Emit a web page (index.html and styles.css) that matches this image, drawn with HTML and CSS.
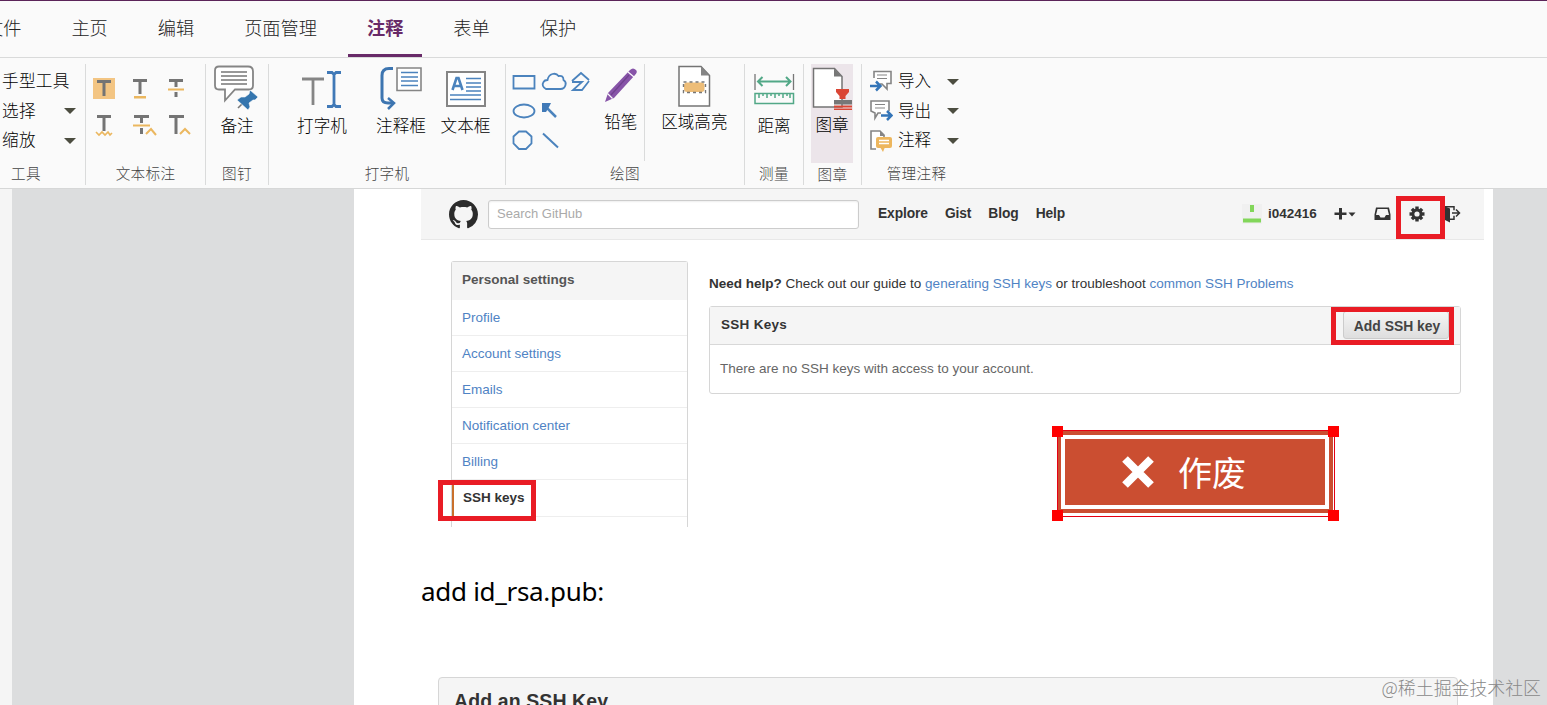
FILE: index.html
```html
<!DOCTYPE html>
<html lang="zh-CN">
<head>
<meta charset="utf-8">
<title>PDF</title>
<link rel="stylesheet" href="styles.css">
</head>
<body>
<div class="app">
<nav class="tabs">
  <span class="tab first">文件</span><span class="tab">主页</span><span class="tab">编辑</span><span class="tab">页面管理</span><span class="tab active">注释</span><span class="tab">表单</span><span class="tab">保护</span>
</nav>
<section class="ribbon">
  <div class="group g-tools">
    <div class="rows">
      <div class="row">手型工具</div>
      <div class="row">选择<i class="caret"></i></div>
      <div class="row">缩放<i class="caret"></i></div>
    </div>
    <div class="caption cap-tools">工具</div>
  </div>
  <div class="group g-text">
    <div class="marks">
      <svg viewBox="92 76 24 26"><path fill="#f3c583" d="M93 78h22v21H93z"/><path fill="none" stroke="#747474" stroke-width="3" d="M97 81.500h14M104 81v15"/></svg>
      <svg viewBox="128 76 24 26"><path fill="none" stroke="#747474" stroke-width="3" d="M133 80.500h14M140 80v14"/><path fill="#ebb75f" d="M134 96h12v2.500h-12z"/></svg>
      <svg viewBox="164 76 24 26"><path fill="none" stroke="#747474" stroke-width="3" d="M169 80.500h14M176 80v17"/><path stroke="#fafafa" stroke-width="5" d="M174 89.500h4"/><path stroke="#ebb75f" stroke-width="2" d="M168 89.500h16"/></svg>
      <svg viewBox="92 112 24 26"><path fill="none" stroke="#747474" stroke-width="3" d="M97 116.500h14M104 116v15"/><path fill="none" stroke="#ebb75f" stroke-width="1.600" d="m96 132 3 3 3-3 3 3 3-3 2 3 2-2"/></svg>
      <svg viewBox="128 112 30 26"><path fill="none" stroke="#747474" stroke-width="3" d="M134 116.500h15M141.500 116v18"/><path stroke="#fafafa" stroke-width="5" d="M139 125.500h5"/><path fill="none" stroke="#ebb75f" stroke-width="2" d="M133 125.500h17M146 134l5-5 5 6"/></svg>
      <svg viewBox="164 112 30 26"><path fill="none" stroke="#747474" stroke-width="3" d="M169 116.500h15M176 116v18"/><path fill="none" stroke="#ebb75f" stroke-width="2" d="m180 134 5-5 5 5"/></svg>
    </div>
    <div class="caption">文本标注</div>
  </div>
  <div class="group g-note">
    <div class="tool"><svg width="46" height="48" viewBox="214 64 46 48"><path fill="#fff" stroke="#858585" stroke-width="1.800" d="M219 66.500h29q5 0 5 5v14q0 4-4 4h-14l-10 11v-11h-6q-4 0-4-4v-15q0-4 4-4z"/><path stroke="#777" stroke-width="1.600" d="M221 72h26M221 76h26M221 80h26M221 84h26"/><path stroke="#777" stroke-width="1.600" d="m238 108 8-8"/><path fill="#3475ae" stroke="#fafafa" stroke-width=".6" d="m250 90 8 7-3 3-2 0-4 3 1 4-2 3-11-10 4-3h4l4-3z"/></svg><span>备注</span></div>
    <div class="caption">图钉</div>
  </div>
  <div class="group g-type">
    <div class="tools">
      <div class="tool w-a"><svg width="44" height="48" viewBox="301 64 44 48"><path fill="none" stroke="#858585" stroke-width="2.800" d="M303 79h22M314 79v26"/><path fill="none" stroke="#4079b7" stroke-width="2.800" d="M328 72.500h5l2 2 2-2h5M335 74v31M328 106.500h5l2-2 2 2h5"/></svg><span>打字机</span></div>
      <div class="tool w-b"><svg width="46" height="48" viewBox="379 64 46 48"><path fill="none" stroke="#3d75b0" stroke-width="3" d="M394 68.500h-4q-7 0-7 7V98q0 5 6 5h5"/><path fill="none" stroke="#3d75b0" stroke-width="2.500" d="m389 98 6 5-6 6"/><path fill="#fff" stroke="#858585" stroke-width="1.600" d="M398 68h24v22.500h-24z"/><path stroke="#4b83bd" stroke-width="1.700" d="M402 72.500h17M402 77h17M402 81h17M402 85.500h17"/></svg><span>注释框</span></div>
      <div class="tool w-c"><svg width="44" height="48" viewBox="444 64 44 48"><path fill="#fff" stroke="#858585" stroke-width="2" d="M447 72h38v34h-38z"/><path fill="none" stroke="#4b83bd" stroke-width="2.600" d="m452.500 90 4-12h2l4 12M454 86h7"/><path stroke="#4b83bd" stroke-width="1.600" d="M466 78.500h15M466 83h15M466 87h15M466 91h15M450 95h31M450 99.500h31"/></svg><span>文本框</span></div>
    </div>
    <div class="caption">打字机</div>
  </div>
  <div class="group g-draw">
    <div class="tools">
      <svg class="shapes" width="84" height="90" viewBox="510 68 84 90" fill="none" stroke="#4b83bd" stroke-width="1.800"><path d="M513.500 76h21v12.500h-21z"/><path d="M546 89q-5-3-2.500-7 1-2 4-2 1-5 5-6 4-1 6 2 5-1 5 4 3 2 2 5-1 4-5 4z"/><path d="m572 81 9-8 8 7M572 82h10l-9 8h9l7-9"/><ellipse cx="524" cy="111" rx="10.500" ry="6.500"/><path d="m545 106 11 11" stroke-width="2.500"/><path fill="#4079b7" stroke="none" d="M542 103h9l-2 4-3 5h-4z"/><path d="M519 131.500h7l5.500 5v7l-5.500 5.500h-7l-5.500-5.500v-7z"/><path d="m543 133.500 15 14" stroke-width="2"/></svg>
      <div class="tool w-d high"><svg width="38" height="48" viewBox="602 64 38 48"><path fill="#8754a8" d="m605 102 3-9 22-23q3-3 6 0 2 2-1 5l-21 23z"/><path stroke="#fafafa" stroke-width="1.200" d="m607.500 93.500 5 5M628 72l6 5"/><path stroke="#70418f" stroke-width="1.200" d="m611 95 18-20"/></svg><span>铅笔</span></div>
      <i class="divider"></i>
      <div class="tool w-e high"><svg width="36" height="48" viewBox="677 64 36 48"><path fill="#fff" stroke="#747474" stroke-width="1.500" d="M680 66.500h22l8.500 9V106H680z"/><path fill="#858585" d="M702 66.500v9h8.500z"/><rect x="685" y="82.500" width="20.500" height="9.500" rx="3" fill="#edbd78"/><rect x="684.500" y="82" width="22" height="10.500" fill="none" stroke="#777" stroke-width="1.400" stroke-dasharray="3 3"/></svg><span>区域高亮</span></div>
    </div>
    <div class="caption">绘图</div>
  </div>
  <div class="group g-dist">
    <div class="tool"><svg width="42" height="48" viewBox="754 64 42 48" fill="none"><path stroke="#777" stroke-width="1.300" d="M756 74v16M794.500 74v16"/><path stroke="#52a887" stroke-width="2" d="M759 81.500h32M763.500 77l-4.500 4.500 4.500 4.500M787 77l4.500 4.500-4.500 4.500"/><path stroke="#52a887" stroke-width="1.500" d="M756 93.500h38.500v10H756zM760 93v5M764 93v3M768 93v5M772 93v3M776 93v5M780 93v3M784 93v5M788 93v3M791 93v5"/></svg><span>距离</span></div>
    <div class="caption">测量</div>
  </div>
  <div class="group g-stamp">
    <div class="tool selected"><svg width="42" height="48" viewBox="811 64 42 48"><path fill="#fff" stroke="#747474" stroke-width="1.500" d="M813.500 68.500h21l7.500 8V107h-28.500z"/><path fill="#777" d="M834 68.500v8h8z"/><path fill="#da4635" d="M836 89h13v3l-3.500 4v3h-6v-3l-3.500-4zM834 105.500h18v2h-18zM834 108.500h18v1.500h-18z"/><path fill="#777" d="M834 100h18v4.500h-18z"/></svg><span>图章</span></div>
    <div class="caption">图章</div>
  </div>
  <div class="group g-manage">
    <div class="rows">
      <div class="row"><svg width="24" height="24" viewBox="869 70 24 24"><path fill="#fff" stroke="#858585" stroke-width="1.600" d="M874 79v-6.500h17v12h-4v5.500l-5-5h-2"/><path stroke="#858585" d="M877 76h10M877 79.500h10"/><path fill="none" stroke="#3475b8" stroke-width="2.500" d="M870 87h9M876 82.500l4.500 4.500-4.500 4.500"/></svg>导入<i class="caret"></i></div>
      <div class="row"><svg width="24" height="24" viewBox="869 99 24 24"><path fill="#fff" stroke="#858585" stroke-width="1.600" d="M881 114h-3l-3 5v-5l-4-2v-10h18v10"/><path stroke="#858585" d="M875 105.500h10M875 109h10"/><path fill="none" stroke="#3475b8" stroke-width="2.500" d="M881 116.500h9M887 112l4.500 4.500-4.500 4.500"/></svg>导出<i class="caret"></i></div>
      <div class="row"><svg width="24" height="24" viewBox="869 128 24 24"><path fill="#fff" stroke="#858585" stroke-width="1.600" d="M876 149h-5v-18h9l4 4v2"/><path fill="#858585" d="M880 131v5h5z"/><rect x="876" y="137" width="16" height="11" rx="2" fill="#edb65d"/><path fill="#edb65d" d="m880 147 3 5 2-5z"/><path stroke="#fff" stroke-width="1.300" d="M879 140.500h10M879 143.500h10"/></svg>注释<i class="caret"></i></div>
    </div>
    <div class="caption">管理注释</div>
  </div>
</section>
<main class="workspace">
<article class="page">
  <div class="shot">
    <header class="gh-header">
      <svg class="logo" viewBox="0 0 16 16"><path fill="#2b2b2b" d="M8 0C3.580 0 0 3.580 0 8c0 3.540 2.290 6.530 5.470 7.590.4.070.55-.17.55-.38 0-.19-.01-.82-.01-1.490-2.010.37-2.530-.49-2.690-.94-.09-.23-.48-.94-.82-1.130-.28-.15-.68-.52-.01-.53.63-.01 1.080.58 1.230.82.72 1.210 1.870.87 2.330.66.07-.52.28-.87.51-1.070-1.780-.2-3.640-.89-3.640-3.950 0-.87.31-1.590.82-2.150-.08-.2-.36-1.020.08-2.120 0 0 .67-.21 2.200.82.64-.18 1.320-.27 2-.27s1.360.09 2 .27c1.530-1.040 2.200-.82 2.200-.82.44 1.100.16 1.920.08 2.120.51.56.82 1.270.82 2.150 0 3.070-1.870 3.750-3.650 3.950.29.25.54.73.54 1.480 0 1.070-.01 1.930-.01 2.200 0 .21.15.46.55.38A8.010 8.010 0 0 0 16 8c0-4.420-3.580-8-8-8z"/></svg>
      <div class="search">Search GitHub</div>
      <nav class="links"><b>Explore</b><b>Gist</b><b>Blog</b><b>Help</b></nav>
      <div class="user">
        <svg width="20" height="20" viewBox="1242 204 20 20"><path fill="#f0f0f0" d="M1242 204h20v20h-20z"/><path fill="#82d65a" d="M1250 205h4v7h-4zM1243 218.500h18v4h-18z"/></svg>
        <b>i042416</b>
        <svg class="ic-plus" width="24" height="16" viewBox="1333 206 24 16"><path fill="#333" d="M1339 208h3v4.500h4.500v2.500H1342v4.500h-3V215h-4.500v-2.500h4.500zM1348.500 212.500h7l-3.500 4z"/></svg>
        <svg class="ic-inbox" width="18" height="16" viewBox="1373 206 18 16"><path fill="#333" fill-rule="evenodd" d="M1376 207.500h13l1.500 7v5.500H1374.500v-5.500zM1377.500 209l-1.500 6h3l1.500 2.500h4l1.500-2.500h3l-1.500-6z"/></svg>
        <svg class="ic-gear" width="16" height="16" viewBox="-8 -8 16 16"><g fill="#333"><path d="M-1.700-7.500h3.400v15h-3.400z"/><path transform="rotate(45)" d="M-1.700-7.200h3.400v14.400h-3.400z"/><path transform="rotate(90)" d="M-1.700-7.500h3.400v15h-3.400z"/><path transform="rotate(135)" d="M-1.700-7.200h3.400v14.400h-3.400z"/></g><circle r="4" fill="none" stroke="#333" stroke-width="3"/><circle r="2.600" fill="#f5f5f5"/></svg>
        <svg class="ic-out" width="18" height="18" viewBox="1443 204 18 18"><path fill="#333" d="m1444 205 6 2.500v14l-6-3z"/><path fill="none" stroke="#333" stroke-width="1.500" d="M1445 205.700h9v3.500M1450 218.200h4v-3.500M1452 212h7M1456 208.500l3.500 3.500-3.500 3.500"/></svg>
      </div>
      <i class="mark mark-gear"></i>
    </header>
    <div class="gh-body">
      <aside class="side">
        <div class="side-head">Personal settings</div>
        <a>Profile</a><a>Account settings</a><a>Emails</a><a>Notification center</a><a>Billing</a>
        <a class="current">SSH keys</a>
        <i class="mark mark-ssh"></i>
      </aside>
      <div class="content">
        <p class="help"><b>Need help?</b> Check out our guide to <a>generating SSH keys</a> or troubleshoot <a>common SSH Problems</a></p>
        <div class="box">
          <div class="box-head"><b>SSH Keys</b><button>Add SSH key</button><i class="mark mark-add"></i></div>
          <div class="box-body">There are no SSH keys with access to your account.</div>
        </div>
      </div>
    </div>
  </div>
  <p class="para"><span>add id_rsa.pub:</span></p>
  <div class="panel"><h2>Add an SSH Key</h2></div>
</article>
<div class="stamp">
  <div class="stamp-fill"><div class="stamp-frame"><svg width="34" height="34" viewBox="0 0 34 34"><path stroke="#fff" stroke-width="8" d="m4 4 26 26M30 4 4 30"/></svg><span>作废</span></div></div>
  <i class="h tl"></i><i class="h tr"></i><i class="h bl"></i><i class="h br"></i>
</div>
<div class="watermark">@稀土掘金技术社区</div>
</main>
</div>
</body>
</html>
```
FILE: styles.css
```css
* { box-sizing: border-box; }
body { margin: 0; font-family: "Noto Sans CJK SC", sans-serif; background: #fafafa; }
svg { display: block; flex: none; }
.app { width: 1547px; height: 705px; overflow: hidden; display: flex; flex-direction: column; }

.tabs { height: 58px; flex: none; display: flex; border-top: 1px solid #5b2459; border-bottom: 1px solid #d9dada; background: #fafafa; }
.tab { font-size: 18.200px; line-height: 26px; color: #222; padding: 13px 19px 0; margin-right: 12px; height: 56px; font-weight: 300; white-space: nowrap; }
.tab.first { margin-left: -34px; }
.tab.active { color: #682a68; font-weight: 700; border-bottom: 3px solid #682a68; }

.ribbon { height: 131px; flex: none; display: flex; background: #fafafa; border-bottom: 1px solid #d6d7d7; padding: 6px 0 3px; font-size: 16.6px; color: #000; font-weight: 300; }
.group { display: flex; flex-direction: column; justify-content: space-between; border-right: 1px solid #dadbdb; flex: none; }
.g-tools { width: 86px; }
.g-text { width: 120px; }
.g-note { width: 63px; }
.g-type { width: 237px; }
.g-draw { width: 239px; }
.g-dist { width: 59px; }
.g-stamp { width: 58px; }
.g-manage { width: 98px; border-right: 0; }
.caption { height: 22px; margin-bottom: 1px; font-size: 14.6px; line-height: 22px; color: #444; text-align: center; letter-spacing: .3px; white-space: nowrap; }
.cap-tools { text-align: left; padding-left: 11px; }
.g-manage .caption { padding-left: 11px; }
.rows { padding: 2px 0 0 2px; }
.g-tools .rows { letter-spacing: .3px; }
.row { display: flex; align-items: center; height: 29.500px; line-height: 29px; white-space: nowrap; }
.caret { width: 0; height: 0; margin: 2px 9px 0 auto; border: 6px solid transparent; border-bottom: 0; border-top: 6px solid #4c4d40; }
.g-manage .rows { padding-left: 7px; }
.g-manage .row svg { margin-right: 5px; }
.g-manage .caret { margin-right: 1px; }
.marks { display: grid; grid-template-columns: repeat(3, 36px); grid-auto-rows: 36px; padding: 12px 0 0 6px; }
.marks svg { height: 26px; justify-self: start; }
.marks svg:nth-child(-n+4) { width: 24px; }
.marks svg:nth-child(n+5) { width: 30px; }
.tools { display: flex; }
.tool { display: flex; flex-direction: column; align-items: center; line-height: 24px; white-space: nowrap; }
.tool span { margin-top: 1px; }
.tool.high span { margin-top: -3px; }
.w-a { width: 80px; margin-left: 13px; }
.w-b { width: 78px; }
.w-c { width: 51px; }
.shapes { margin: 4px 0 0 4px; }
.w-d { width: 50px; margin-left: 2px; }
.w-e { width: 100px; }
.divider { width: 1px; height: 97px; background: #dadbdb; margin-left: -2px; }
.selected { width: 42px; height: 99px; flex: none; margin-left: 7px; background: #ece5ea; }
.selected span { margin-top: 0; }

.workspace { position: relative; flex: 1; display: flex; background: #dcddde; border-left: 12px solid #f5f5f5; }
.page { width: 1139px; margin-left: 342px; height: 516px; overflow: hidden; background: #fff; }
.shot { margin-left: 67px; width: 1063px; height: 338px; overflow: hidden; font: 13.500px/20px "Liberation Sans", sans-serif; color: #444; }
.gh-header { position: relative; height: 51px; background: #f5f5f5; border-bottom: 1px solid #e8e8e8; display: flex; align-items: center; padding-left: 28px; color: #333; }
.logo { width: 29px; height: 29px; }
.search { width: 371px; height: 29px; margin-left: 10px; border: 1px solid #ccc; border-radius: 3px; background: #fff; box-shadow: inset 0 1px 2px #eee; color: #aaa; padding: 3px 8px; font-size: 13px; }
.links { display: flex; gap: 17px; margin-left: 19px; width: 364px; font-size: 13.800px; letter-spacing: -.1px; }
.user { display: flex; align-items: center; }
.user b { margin-left: 6px; width: 65px; }
.ic-inbox { margin-left: 16px; }
.ic-gear { margin-left: 18px; }
.ic-out { margin-left: 18px; }
.mark { position: absolute; border: 5px solid #e91c25; z-index: 2; }
.mark-gear { left: 975px; top: 7px; width: 49px; height: 43px; }
.mark-ssh { left: -14px; top: 218px; width: 98px; height: 41px; }
.mark-add { right: 6px; top: 0; width: 123px; height: 38px; }
.gh-body { display: flex; padding: 21px 23px 0 30px; }
.side { position: relative; width: 237px; height: 290px; border: 1px solid #d6d6d6; border-bottom: 0; border-radius: 3px 3px 0 0; flex: none; }
.side-head { height: 37.500px; background: #f5f5f5; padding: 8px 10px; font-weight: 700; color: #555; }
.side a { display: block; height: 36.200px; padding: 8px 10px; border-bottom: 1px solid #eee; }
a { color: #4f83c4; }
.side a.current { color: #333; font-weight: 700; border-left: 2px solid #c9702c; padding-left: 9px; }
.content { flex: 1; margin-left: 21px; }
.help { margin: 13px 0 12px; height: 20px; color: #333; white-space: nowrap; }
.box { position: relative; height: 88px; border: 1px solid #d6d6d6; border-radius: 3px; }
.box-head { display: flex; justify-content: space-between; height: 38px; background: #f5f5f5; border-bottom: 1px solid #d8d8d8; padding: 4px 11px; line-height: 27px; color: #333; letter-spacing: .3px; }
.box-head button { width: 106px; height: 28px; border: 1px solid #ccc; border-radius: 3px; background: linear-gradient(#f5f5f5, #dedede); color: #444; padding: 1px 0 0 2px; font: 700 13.900px "Liberation Sans", sans-serif; }
.box-body { padding: 14px 10px; color: #666; }
.para { margin: 43px 0 0 67px; height: 42px; font: 26px/42px "Noto Sans", sans-serif; letter-spacing: -.3px; color: #000; white-space: nowrap; }
.panel { width: 1020px; height: 60px; margin: 65px 0 0 84px; border: 1px solid #d6d6d6; border-radius: 4px; background: #f5f5f5; }
.panel h2 { margin: 11px 15px; font: 700 19.500px/24px "Liberation Sans", sans-serif; letter-spacing: .1px; color: #333; }

.stamp { position: absolute; left: 1045px; top: 241px; width: 278px; height: 87px; border: 1px solid #e60012; background: #fff; }
.stamp-fill { width: 275px; height: 82px; background: #cb4e31; padding: 4px 4px 4px 3px; }
.stamp-frame { height: 74px; border: 4px solid #fff; display: flex; align-items: center; padding-left: 56px; color: #fff; font-size: 34px; font-weight: 400; line-height: 50px; }
.stamp-frame span { margin-left: 23px; }
.h { position: absolute; width: 11px; height: 11px; background: #f00; }
.tl { left: -6px; top: -5px; }
.tr { right: -5px; top: -5px; }
.bl { left: -6px; bottom: -5px; }
.br { right: -5px; bottom: -5px; }
.watermark { position: absolute; right: 6px; bottom: 5px; font-size: 17.900px; line-height: 26px; font-weight: 300; color: #888; white-space: nowrap; }
```
